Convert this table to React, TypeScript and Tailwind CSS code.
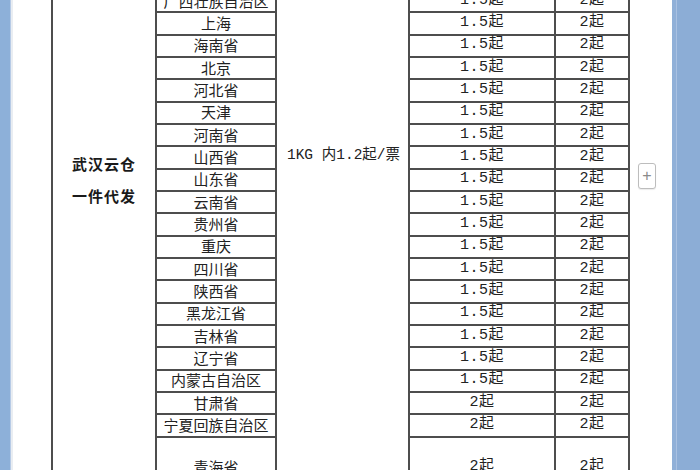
const provinces = [
  "广西壮族自治区",
  "上海",
  "海南省",
  "北京",
  "河北省",
  "天津",
  "河南省",
  "山西省",
  "山东省",
  "云南省",
  "贵州省",
  "重庆",
  "四川省",
  "陕西省",
  "黑龙江省",
  "吉林省",
  "辽宁省",
  "内蒙古自治区",
  "甘肃省",
  "宁夏回族自治区",
  "青海省",
];

const firstWeight = provinces.map((_, i) => (i < 18 ? "1.5起" : "2起"));
const extraWeight = provinces.map(() => "2起");

function Cells({ items, mono }: { items: string[]; mono?: boolean }) {
  return (
    <div className="flex flex-col">
      {items.map((text, i) => (
        <div
          key={i}
          className={
            (i === items.length - 1 ? "h-[60px] " : "h-[22.33px] pb-[2px] ") +
            "flex items-center justify-center border-b-2 border-[#4d4d4d] whitespace-nowrap text-[15px] leading-none text-[#222]"
          }
        >
          <span
            className={
              mono
                ? "font-['Liberation_Mono','Noto_Sans_CJK_SC',monospace] tracking-[0.5px]"
                : "font-['Noto_Sans_CJK_SC',sans-serif]"
            }
          >
            {text}
          </span>
        </div>
      ))}
    </div>
  );
}

export default function App() {
  return (
    <div className="flex h-[470px] w-[700px] overflow-hidden bg-white">
      <div className="flex w-[13px] shrink-0">
        <div className="w-[10px] bg-[#8db0d9]" />
        <div className="w-[1px] bg-[#b7cbe6]" />
        <div className="w-[2px] bg-[#e9edf2]" />
      </div>

      <div className="flex flex-1 pl-[38px]">
        <div className="-mt-[9px] flex h-[600px] items-start">
          <div className="flex h-full w-[104px] flex-col items-center border-l-2 border-[#4d4d4d] pt-[157px] font-['Noto_Sans_CJK_SC',sans-serif] text-[15px] font-bold leading-[32px] tracking-[1px] text-[#1a1a1a]">
            <span>武汉云仓</span>
            <span>一件代发</span>
          </div>

          <div className="w-[120px] border-l-2 border-[#4d4d4d]">
            <Cells items={provinces} />
          </div>

          <div className="flex h-full w-[133px] justify-center border-l-2 border-[#4d4d4d] pl-[2px] pt-[153px] font-['Liberation_Mono','Noto_Sans_CJK_SC',monospace] text-[14.5px] leading-[22px] text-[#222]">
            1KG 内1.2起/票
          </div>

          <div className="w-[146px] border-l-2 border-[#4d4d4d]">
            <Cells items={firstWeight} mono />
          </div>

          <div className="w-[76px] border-x-2 border-[#4d4d4d]">
            <Cells items={extraWeight} mono />
          </div>
        </div>

        <div className="flex-1 pl-[8px] pt-[163px]">
          <div className="flex h-[26px] w-[18px] items-center justify-center rounded-[3px] border border-[#bdbdbd] bg-white pb-[1px] font-['Liberation_Sans',sans-serif] text-[16px] text-[#8a8a8a] shadow-[0_1px_1px_rgba(0,0,0,0.08)]">
            +
          </div>
        </div>
      </div>

      <div className="flex w-[28px] shrink-0">
        <div className="w-[4px] bg-[#90b0d8]" />
        <div className="w-[1px] bg-[#a9c1e2]" />
        <div className="flex-1 bg-[#8cadd6]" />
      </div>
    </div>
  );
}
